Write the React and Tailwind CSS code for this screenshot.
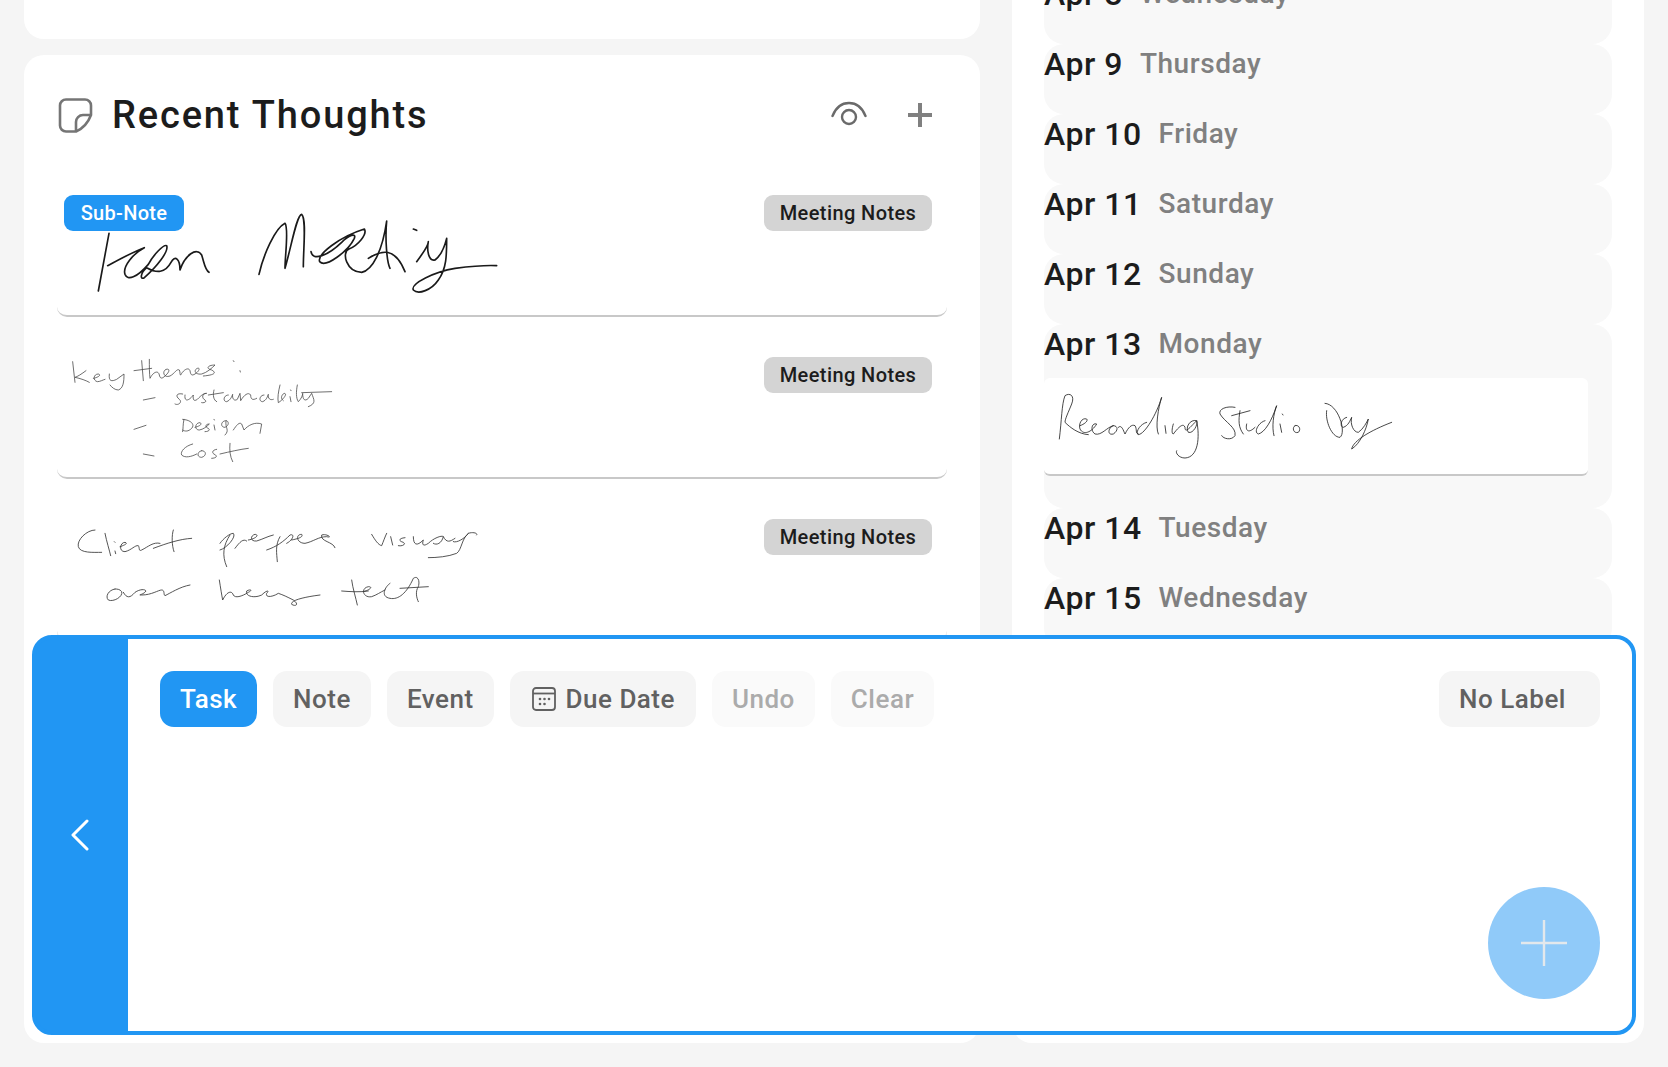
import { Fragment } from "react";

const DAYS = [
  { date: "Apr 8", day: "Wednesday" },
  { date: "Apr 9", day: "Thursday" },
  { date: "Apr 10", day: "Friday" },
  { date: "Apr 11", day: "Saturday" },
  { date: "Apr 12", day: "Sunday" },
  { date: "Apr 13", day: "Monday", note: true },
  { date: "Apr 14", day: "Tuesday" },
  { date: "Apr 15", day: "Wednesday" },
];

// handwriting strokes, traced at 3x the size they are drawn
const TEAM_MEETING = [
  "M72 85 L40 258",
  "M68 182 C100 165 145 140 178 128 C145 145 112 185 120 208 C128 228 155 218 190 178 C205 150 235 118 245 122 C252 140 215 185 178 218 C165 226 165 205 185 188 C215 205 240 205 258 172 C270 150 285 160 285 195 C300 150 335 125 350 150 C358 175 360 195 372 202",
  "M522 208 C535 150 570 70 600 55 C612 70 600 150 600 190 C620 120 635 30 650 28 C665 40 655 130 655 185",
  "M678 140 C682 168 725 155 770 112 C790 92 815 82 808 100 C790 138 722 190 704 170 C695 148 765 95 838 72 C848 88 818 122 792 132 C768 142 785 202 830 202 C862 195 892 140 905 48 C900 100 905 170 915 190",
  "M850 160 C890 135 930 125 960 200",
  "M985 72 L995 76",
  "M995 170 C1010 150 1030 120 1030 110 C1025 135 1030 170 1050 165 C1070 150 1080 120 1085 100 C1085 150 1085 190 1060 225 C1040 255 1000 270 985 255 C975 235 1050 200 1110 190 C1150 185 1200 180 1235 182",
];

const KEY_THEMES = [
  "M38 35 L45 97",
  "M78 62 C65 72 52 80 45 82 C60 85 80 92 88 97",
  "M100 85 C115 82 125 75 115 72 C100 72 98 92 112 95 C120 95 128 90 135 88",
  "M148 72 C145 95 155 95 170 88 L192 72 C192 95 190 115 175 120 C165 120 155 112 150 105",
  "M245 32 L250 92",
  "M222 62 L275 55",
  "M268 28 C268 50 268 70 270 85 C280 65 295 60 298 75 C300 85 305 88 315 78 C330 65 330 55 318 58 C305 65 312 85 330 78 C345 70 350 55 358 60 C362 68 358 75 362 75 C370 60 385 50 390 62 C392 75 395 78 405 72 C420 62 420 52 412 55 C400 60 405 75 425 72 C440 68 455 55 465 45 C445 45 435 55 455 60 C470 68 465 75 430 78",
  "M520 32 L522 35",
  "M540 62 L541 66",
  "M250 150 L285 143",
  "M368 132 C350 128 345 138 358 148 C368 156 355 168 345 162",
  "M375 135 C372 155 385 155 400 135 C398 150 402 155 412 148 C425 135 430 130 440 130 C425 130 425 145 435 150 C442 155 432 160 425 158",
  "M462 120 C458 135 460 150 470 155 M445 135 L490 128",
  "M505 135 C490 135 488 155 500 155 C512 150 515 140 518 133 C516 145 522 155 532 148 L540 130 L542 152 C552 135 565 125 572 135 C572 148 578 152 590 145",
  "M612 135 C598 135 595 155 608 155 C620 150 622 140 625 133 C623 145 630 152 640 148",
  "M660 105 C655 125 652 145 655 158 C668 150 685 130 672 130 C665 135 660 145 670 152",
  "M690 140 L693 155 M692 120 L693 122",
  "M712 105 C708 125 708 145 715 155 C725 145 728 135 728 130 C728 150 735 155 745 145 L755 130 C762 150 770 160 745 170",
  "M725 128 L815 125",
  "M222 238 L258 226",
  "M372 208 C368 225 370 238 368 245 M368 208 C395 210 405 225 395 235 C385 245 375 245 368 240",
  "M405 232 C420 228 428 222 420 218 C405 218 402 240 418 240 C430 238 440 230 448 222 C435 222 435 232 445 235 C452 240 445 245 435 245",
  "M462 225 L465 240 M462 208 L463 210",
  "M498 212 C482 212 480 232 495 232 C510 225 505 212 498 212 C495 235 510 240 495 255",
  "M520 240 C530 225 538 215 545 222 L552 240 C565 225 585 215 605 222 L600 250",
  "M250 312 L282 318",
  "M398 282 C375 288 360 305 365 315 C375 325 395 320 410 312",
  "M425 302 C410 305 410 322 425 322 C440 318 440 302 425 302",
  "M470 298 C455 300 455 310 465 314 C475 320 465 325 455 325",
  "M510 280 C508 300 510 320 518 335",
  "M480 312 C510 305 540 298 565 295",
];

const CLIENT_PREFERS = [
  "M75 45 C50 45 20 75 25 95 C30 115 70 112 95 112",
  "M105 55 C110 80 118 105 122 122",
  "M135 108 L137 116 M133 80 L135 82",
  "M150 95 C165 90 175 85 165 82 C150 82 145 110 165 110 C185 105 195 90 205 92 C210 100 205 110 215 105 C235 95 250 80 270 85",
  "M310 45 C305 60 305 90 312 110",
  "M250 100 C290 85 330 72 365 70",
  "M450 85 C460 70 480 55 490 55 C500 65 470 100 450 105",
  "M480 60 C460 90 455 120 470 155",
  "M495 100 C510 80 520 70 530 78",
  "M535 75 C555 72 570 60 555 58 C540 62 540 80 560 78 C580 72 590 65 610 60",
  "M630 65 C615 90 620 115 622 140",
  "M590 105 C620 95 640 80 660 60 C675 55 670 75 650 85",
  "M665 75 C690 70 700 65 695 58 C675 58 680 85 705 85 C730 80 745 65 770 65 C790 70 770 55 755 60 C750 80 790 80 795 98",
  "M905 58 C915 75 925 90 935 92 C940 80 945 65 950 55",
  "M962 65 L968 90",
  "M1005 68 C985 70 985 78 1000 82 C1010 88 995 95 985 92",
  "M1030 65 C1030 90 1040 95 1060 75 C1055 90 1060 95 1075 85 C1090 70 1115 60 1120 65 C1115 85 1100 92 1090 85",
  "M1120 65 C1130 85 1140 80 1155 70",
  "M1150 80 C1160 85 1185 70 1195 55 C1210 50 1225 55 1220 60",
  "M1195 55 C1175 70 1175 105 1160 115 C1135 125 1100 128 1075 128",
  "M135 222 C115 225 105 245 115 255 C130 262 160 245 155 230 C150 222 140 222 135 222",
  "M160 232 C170 250 180 250 195 232 C210 222 225 222 228 228 C220 240 200 240 215 240 C245 240 265 225 275 225 C285 225 280 240 285 242 C300 235 330 215 360 210",
  "M448 195 C452 220 455 240 458 255 C470 230 485 225 490 240 C495 250 515 245 535 232 C550 225 540 222 530 228 C525 245 555 250 575 240 C590 225 600 225 590 235 C585 250 610 245 625 235 C640 240 650 245 670 255 C690 270 675 275 665 268 C660 255 710 245 750 240",
  "M845 195 C848 220 858 250 862 270",
  "M815 228 C840 230 870 232 895 228",
  "M880 230 C900 225 910 215 895 215 C870 220 880 250 905 245 C920 240 930 232 945 225",
  "M960 205 C945 215 930 245 960 250 C985 255 1010 235 1030 190 C1045 180 1050 200 1045 215 C1035 230 1040 250 1045 260",
  "M990 220 L1075 215",
];

const RECORDING = [
  "M28 165 C35 110 35 60 45 35 C60 25 75 35 65 60 C55 85 45 105 45 115 C60 130 85 150 115 152",
  "M90 125 C105 120 115 110 110 105 C95 100 85 120 90 135 C100 155 125 145 140 120 C125 115 120 140 135 150 C155 155 170 130 190 125 C175 130 170 155 190 150 C205 140 205 125 190 125",
  "M205 130 C215 120 220 140 225 150 C235 130 245 120 255 125 C262 135 255 150 265 150",
  "M290 115 C270 120 255 145 265 152 C285 150 320 90 335 40 C325 70 315 130 325 150",
  "M345 125 L348 148",
  "M370 120 C365 135 365 150 370 150 C385 130 400 115 405 130 C405 150 420 130 440 110 C420 105 405 130 415 145 C430 150 445 120 440 110 C450 160 445 220 405 222 C385 222 375 205 380 200",
  "M555 70 C530 65 505 75 510 90 C525 115 560 130 555 155 C545 170 520 165 515 155",
  "M570 80 C565 110 565 130 580 150",
  "M545 95 L600 80",
  "M590 120 C585 140 595 150 615 130",
  "M645 110 C625 115 610 145 625 150 C645 145 665 110 680 65 C670 90 665 130 672 155",
  "M690 120 L695 145 M697 90 L699 93",
  "M735 125 C725 130 730 150 745 145 C755 135 745 120 735 125",
  "M830 80 C825 110 845 160 870 160 C890 145 865 60 825 58",
  "M890 100 C870 105 870 130 880 130 C895 125 900 110 905 100 C900 120 910 145 925 145 C940 135 950 115 955 105 C950 135 930 180 905 195 C910 170 960 140 1025 115",
];

function Ink({ strokes, width, height, color, weight }) {
  return (
    <svg
      width={width}
      height={height}
      viewBox={`0 0 ${width * 3} ${height * 3}`}
      fill="none"
      stroke={color}
      strokeWidth={weight}
      strokeLinecap="round"
      strokeLinejoin="round"
      className="block"
    >
      {strokes.map((d, i) => (
        <path key={i} d={d} />
      ))}
    </svg>
  );
}

function LabelTag() {
  return (
    <span className="absolute top-[16px] right-[15px] h-[36px] w-[168px] rounded-[9px] bg-[#d4d4d4] flex items-center justify-center text-[20px] font-[465] tracking-[0.4px] text-[#1c1c1c]">
      Meeting Notes
    </span>
  );
}

function ToolButton({ children, className }) {
  return (
    <button
      className={`h-[56px] rounded-[14px] flex items-center text-[26px] font-[465] tracking-[0.5px] ${className}`}
    >
      {children}
    </button>
  );
}

export default function App() {
  return (
    <div className="relative h-[1067px] overflow-hidden bg-[#f5f5f5] px-[24px] pb-[24px] flex gap-[32px] font-['Roboto',sans-serif]">
      {/* left column */}
      <div className="w-[956px] flex flex-col gap-[16px]">
        <div className="h-[39px] bg-white rounded-b-[20px]" />

        <div className="flex-1 bg-white rounded-[20px] px-[33px] pt-[40px] overflow-hidden">
          <div className="flex items-center h-[40px] pl-[1px] pr-[15px] mb-[44px]">
            <svg width="35" height="35" viewBox="0 0 35 35" fill="none" stroke="#757575" strokeWidth="2.6" strokeLinejoin="round">
              <path d="M8 1.5H27a6 6 0 0 1 6 6V17C30 25 26 30 18 33.5H8a6 6 0 0 1-6-6V7.5a6 6 0 0 1 6-6z" />
              <path d="M18 33V24a7 7 0 0 1 7-7H33" />
            </svg>
            <h2 className="ml-[19px] text-[38px] font-[465] tracking-[1.85px] text-[#1c1c1c]">
              Recent Thoughts
            </h2>
            <svg className="ml-auto" width="36" height="30" viewBox="0 0 36 30" fill="none" stroke="#6a6a6a" strokeWidth="2.4" strokeLinecap="round">
              <path d="M1.5 16C5 7 11 3 18 3s13 4 16.5 13" />
              <circle cx="18" cy="17" r="7" />
            </svg>
            <svg className="ml-[41px]" width="24" height="24" viewBox="0 0 24 24" fill="none" stroke="#808080" strokeWidth="4">
              <path d="M12 0V24M0 12H24" />
            </svg>
          </div>

          <div className="relative h-[138px] border-b-2 border-[#c8c8c8] rounded-[10px] pl-[28px] pt-[26px] mb-[24px]">
            <span className="absolute top-[16px] left-[7px] h-[36px] w-[120px] rounded-[9px] bg-[#2196f3] flex items-center justify-center text-[20px] font-medium tracking-[0.3px] text-white">
              Sub-Note
            </span>
            <LabelTag />
            <Ink strokes={TEAM_MEETING} width={420} height={100} color="#1a1a1a" weight={5} />
          </div>

          <div className="relative h-[138px] border-b-2 border-[#c8c8c8] rounded-[10px] pl-[3px] pt-[9px] mb-[24px]">
            <LabelTag />
            <Ink strokes={KEY_THEMES} width={290} height={120} color="#4a4a4a" weight={2.4} />
          </div>

          <div className="relative h-[138px] border-b-2 border-[#c8c8c8] rounded-[10px] pl-[13px] pt-[12px]">
            <LabelTag />
            <Ink strokes={CLIENT_PREFERS} width={420} height={100} color="#3a3a3a" weight={2.6} />
          </div>
        </div>
      </div>

      {/* calendar column */}
      <div className="w-[632px] -mt-[40px] bg-white rounded-[20px] pt-[14px] pl-[32px] overflow-hidden">
        {DAYS.map((d) => (
          <Fragment key={d.date}>
            <div className={`w-[568px] bg-[#f8f8f8] rounded-[20px] ${d.note ? "h-[184px]" : "h-[70px]"}`}>
              <div className="flex items-center h-[40px] text-[32px] font-[465]">
                <span className="text-[#1c1c1c] tracking-[0.5px]">{d.date}</span>
                <span className="ml-[17px] text-[28px] text-[#808080] tracking-[0.55px]">{d.day}</span>
              </div>
              {d.note && (
                <div className="mt-[14px] w-[544px] h-[98px] bg-white border-b-2 border-[#c8c8c8] rounded-[6px] pl-[6px] pt-[6px]">
                  <Ink strokes={RECORDING} width={350} height={85} color="#1a1a1a" weight={2.4} />
                </div>
              )}
            </div>
          </Fragment>
        ))}
      </div>

      {/* composer sits over both columns */}
      <div className="absolute left-[32px] top-[635px] w-[1604px] h-[400px] flex border-4 border-[#2196f3] rounded-[20px] bg-[#2196f3]">
        <div className="w-[92px] flex items-center justify-center">
          <svg className="-ml-[4px]" width="20" height="32" viewBox="0 0 20 32" fill="none" stroke="white" strokeWidth="3" strokeLinecap="round" strokeLinejoin="round">
            <path d="M17 2L3 16L17 30" />
          </svg>
        </div>
        <div className="relative flex-1 p-[32px] bg-white rounded-r-[16px]">
          <div className="flex items-center gap-[16px]">
            <ToolButton className="px-[20px] bg-[#2196f3] text-white">Task</ToolButton>
            <ToolButton className="px-[20px] bg-[#f5f5f5] text-[#616161]">Note</ToolButton>
            <ToolButton className="px-[20px] bg-[#f5f5f5] text-[#616161]">Event</ToolButton>
            <ToolButton className="pl-[22px] pr-[21px] gap-[10px] bg-[#f5f5f5] text-[#616161]">
              <svg width="24" height="24" viewBox="0 0 24 24" fill="none" stroke="#616161" strokeWidth="1.8">
                <rect x="1" y="1" width="22" height="22" rx="3" />
                <path d="M1 6.5H23" />
                <g fill="#616161" stroke="none">
                  <circle cx="8" cy="12" r="1.3" />
                  <circle cx="12.5" cy="12" r="1.3" />
                  <circle cx="17" cy="12" r="1.3" />
                  <circle cx="8" cy="17" r="1.3" />
                  <circle cx="12.5" cy="17" r="1.3" />
                </g>
              </svg>
              Due Date
            </ToolButton>
            <ToolButton className="px-[20px] bg-[#fafafa] text-[#ababab]">Undo</ToolButton>
            <ToolButton className="px-[20px] bg-[#fafafa] text-[#ababab]">Clear</ToolButton>
            <ToolButton className="ml-auto pl-[20px] pr-[34px] bg-[#f5f5f5] text-[#616161]">No Label</ToolButton>
          </div>
          <button className="absolute right-[32px] bottom-[32px] w-[112px] h-[112px] rounded-full bg-[#90caf9] flex items-center justify-center">
            <svg width="46" height="46" viewBox="0 0 46 46" fill="none" stroke="#e3e8ec" strokeWidth="2.4">
              <path d="M23 0V46M0 23H46" />
            </svg>
          </button>
        </div>
      </div>
    </div>
  );
}
